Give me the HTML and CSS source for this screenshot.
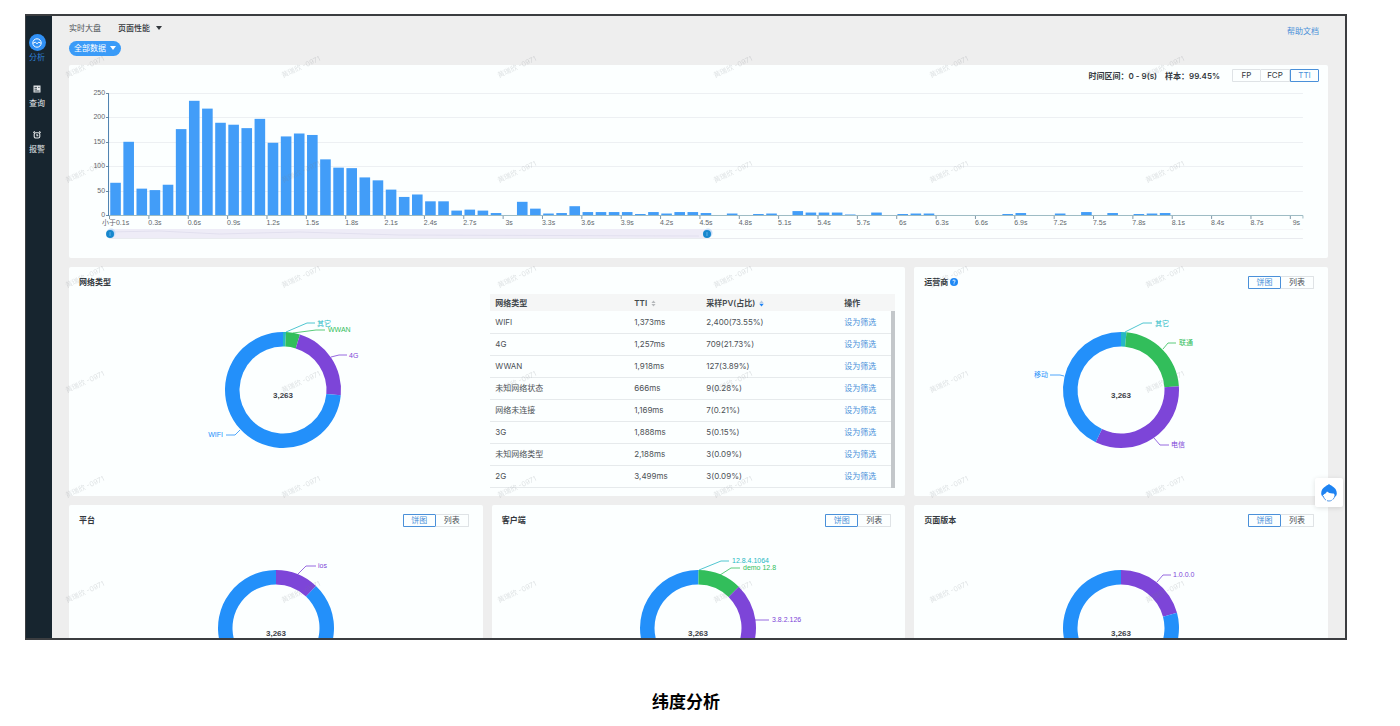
FILE: index.html
```
<!DOCTYPE html>
<html lang="zh-CN">
<head>
<meta charset="utf-8">
<title>纬度分析</title>
<link rel="stylesheet" href="styles.css">
</head>
<body>
<figure class="figure">
  <div class="screen">
    <nav class="sidebar">
      <a class="nav-item active" href="#">
        <span class="nav-badge"><svg width="10" height="10" viewBox="0 0 10 10" fill="none" stroke="currentColor"><circle cx="5" cy="5" r="4.2"/><path d="M1.2 5.2 3.3 4.2 5 5.7 6.8 4.2 8.8 5.2"/></svg></span>
        分析
      </a>
      <a class="nav-item" href="#">
        <span class="nav-badge"><svg width="8" height="8" viewBox="0 0 8 8"><path fill="currentColor" d="M.5.5h7v7h-7z"/><path stroke="#17252f" stroke-width=".8" d="M1.500 2.400h2.500M1.500 4.200h2.500M1.500 6h5M5.200 2.400h1.300"/></svg></span>
        查询
      </a>
      <a class="nav-item" href="#">
        <span class="nav-badge"><svg width="8" height="8" viewBox="0 0 8 8" fill="none" stroke="currentColor" stroke-width="1.100"><rect x="1.200" y="1.700" width="5.600" height="5.300" rx="1.600"/><path d="M.3 1.700 1.800.5M7.700 1.700 6.200.5M4 3v1.700h1.300"/></svg></span>
        报警
      </a>
    </nav>
    <main class="main">
      <header class="topbar">
        <div class="topbar-left">
          <div class="tabs">
            <a class="tab" href="#">实时大盘</a>
            <a class="tab current" href="#">页面性能 <span class="caret"></span></a>
          </div>
          <button class="pill" type="button">全部数据 <span class="caret"></span></button>
        </div>
        <a class="link help" href="#">帮助文档</a>
      </header>
      <div class="content">
        <section class="card wide">
          <div class="chart-head">
            <span>时间区间：0 - 9(s)</span>
            <span>样本：99.45%</span>
            <div class="toggle metric"><button type="button">FP</button><button type="button">FCP</button><button type="button" class="on">TTI</button></div>
          </div>
          <svg class="histogram" id="histogram" viewBox="0 0 1259 172"></svg>
        </section>

        <section class="card network">
          <div class="card-head"><h2>网络类型</h2></div>
          <div class="split">
            <svg class="donut" id="network" viewBox="0 0 300 180"></svg>
            <div class="table-box">
              <table>
                <thead>
                  <tr><th class="c-name">网络类型</th><th class="c-tti">TTI <svg class="sort" viewBox="0 0 6 8"><path fill="#b5b8bb" d="M3 .5 5.5 3.4h-5zM3 7.5.5 4.6h5z"/></svg></th><th class="c-pv">采样PV(占比) <svg class="sort" viewBox="0 0 6 8"><path fill="#b5c9e0" d="M3 .5 5.5 3.4h-5z"/><path fill="#1e83f5" d="M3 7.5.3 4.2h5.4z"/></svg></th><th>操作</th></tr>
                </thead>
                <tbody>
                  <tr><td>WIFI</td><td>1,373ms</td><td>2,400(73.55%)</td><td><a class="link" href="#">设为筛选</a></td></tr>
                  <tr><td>4G</td><td>1,257ms</td><td>709(21.73%)</td><td><a class="link" href="#">设为筛选</a></td></tr>
                  <tr><td>WWAN</td><td>1,918ms</td><td>127(3.89%)</td><td><a class="link" href="#">设为筛选</a></td></tr>
                  <tr><td>未知网络状态</td><td>666ms</td><td>9(0.28%)</td><td><a class="link" href="#">设为筛选</a></td></tr>
                  <tr><td>网络未连接</td><td>1,169ms</td><td>7(0.21%)</td><td><a class="link" href="#">设为筛选</a></td></tr>
                  <tr><td>3G</td><td>1,888ms</td><td>5(0.15%)</td><td><a class="link" href="#">设为筛选</a></td></tr>
                  <tr><td>未知网络类型</td><td>2,188ms</td><td>3(0.09%)</td><td><a class="link" href="#">设为筛选</a></td></tr>
                  <tr><td>2G</td><td>3,499ms</td><td>3(0.09%)</td><td><a class="link" href="#">设为筛选</a></td></tr>
                </tbody>
              </table>
              <span class="scrollbar"></span>
            </div>
          </div>
        </section>

        <section class="card">
          <div class="card-head"><h2>运营商 <svg class="hint" viewBox="0 0 8 8"><circle cx="4" cy="4" r="4" fill="#1e88f5"/><path d="M2.9 3.1a1.1 1.1 0 1 1 1.5 1c-.3.2-.4.3-.4.7M4 5.4v.9" fill="none" stroke="#fff" stroke-width=".9"/></svg></h2><div class="toggle"><button type="button" class="on">饼图</button><button type="button">列表</button></div></div>
          <svg class="donut" id="carrier" viewBox="0 0 300 180"></svg>
        </section>

        <section class="card">
          <div class="card-head"><h2>平台</h2><div class="toggle"><button type="button" class="on">饼图</button><button type="button">列表</button></div></div>
          <svg class="donut" id="platform" viewBox="0 0 300 180"></svg>
        </section>
        <section class="card">
          <div class="card-head"><h2>客户端</h2><div class="toggle"><button type="button" class="on">饼图</button><button type="button">列表</button></div></div>
          <svg class="donut" id="client" viewBox="0 0 300 180"></svg>
        </section>
        <section class="card">
          <div class="card-head"><h2>页面版本</h2><div class="toggle"><button type="button" class="on">饼图</button><button type="button">列表</button></div></div>
          <svg class="donut" id="version" viewBox="0 0 300 180"></svg>
        </section>
      </div>
      <svg class="watermark" aria-hidden="true">
        <defs><pattern id="wm" width="216" height="105" patternUnits="userSpaceOnUse"><text class="wm-text" transform="translate(15 23) rotate(-25)">黄瑞欣 -0971</text></pattern></defs>
        <rect width="100%" height="100%" fill="url(#wm)"/>
      </svg>
      <button class="assistant" type="button" aria-label="助手">
        <svg width="18" height="20" viewBox="0 0 18 20"><circle cx="9" cy="12.200" r="5.800" fill="#fff" stroke="#2b7fe0" stroke-width=".8" stroke-dasharray="5 1"/><path fill="#1e83f2" d="M9 .8c.6 1 1.600 1.300 3 2.200 3 1.600 4.800 4.300 4.800 7.200 0 1.500-.6 2.800-1.500 3.600-.1-1.600-.6-2.600-1.600-3.300-2.500.3-5.100-.3-6.700-1.900-.7 1.500-2 2.600-4 3.100-.2.700-.2 1.400-.2 2.100-1.100-.9-1.600-2.100-1.600-3.600 0-2.900 1.800-5.600 4.800-7.200C7.400 2.100 8.400 1.800 9 .8z"/></svg>
      </button>
    </main>
  </div>
  <figcaption>纬度分析</figcaption>
</figure>
<script src="charts.js"></script>
</body>
</html>
```
FILE: styles.css
```
* { box-sizing: border-box; }

body {
  margin: 0;
  background: #fff;
  color: #4c5156;
  font: 8px/12px Inter, "Noto Sans CJK SC", sans-serif;
}

a { color: inherit; text-decoration: none; }

button {
  font: inherit;
  color: inherit;
  cursor: pointer;
}

.figure {
  display: flex;
  flex-direction: column;
  height: 100vh;
  margin: 0;
  padding: 14px 53px 0 25px;
}

.screen {
  flex: 1;
  min-height: 0;
  display: flex;
  border: 2px solid #3b3d40;
  border-left-width: 1px;
  overflow: hidden;
}

figcaption {
  height: 86px;
  padding-top: 50px;
  text-align: center;
  color: #000;
  font-size: 17px;
  font-weight: 700;
  line-height: 25px;
}

/* Sidebar */
.sidebar {
  flex: 0 0 26px;
  display: flex;
  flex-direction: column;
  gap: 18px;
  padding: 18px 4px 0 0;
  background: #17252f;
  color: #e6e9eb;
}

.nav-item {
  display: flex;
  flex-direction: column;
  align-items: center;
  height: 28px;
}

.nav-badge {
  display: flex;
  align-items: center;
  justify-content: center;
  flex: 0 0 17px;
  width: 17px;
  border-radius: 50%;
}

.nav-item.active { color: #2f80d6; }
.nav-item.active .nav-badge { background: #3090f5; color: #fff; }

/* Main area */
.main {
  flex: 1;
  min-width: 0;
  position: relative;
  display: flex;
  flex-direction: column;
  background: #eee;
}

.topbar {
  flex: 0 0 49px;
  display: flex;
  justify-content: space-between;
  padding: 6px 26px 0 17px;
}

.topbar-left {
  display: flex;
  flex-direction: column;
  align-items: flex-start;
  gap: 7px;
}

.tabs { display: flex; gap: 17px; }
.tab.current { font-weight: 500; color: #33383d; }
.help { margin-top: 3px; }
.link { color: #4a90d9; }

.caret {
  display: inline-block;
  margin-left: 4px;
  border: 3px solid transparent;
  border-top: 4px solid currentColor;
  border-bottom: 0;
  vertical-align: 1px;
}

.pill {
  height: 15px;
  padding: 0 5px;
  border: 0;
  border-radius: 8px;
  background: #3a9bf8;
  color: #fff;
  line-height: 15px;
}

.pill .caret { margin-left: 2px; }

.content {
  flex: 1;
  min-height: 0;
  display: grid;
  grid-template-columns: repeat(3, minmax(0, 1fr));
  grid-auto-rows: max-content;
  gap: 9px;
  padding: 0 17px;
  overflow: hidden;
}

.card {
  min-width: 0;
  min-height: 229px;
  padding: 8px 10px 6px;
  border-radius: 2px;
  background: #fcffff;
}

.card.wide {
  grid-column: 1 / -1;
  min-height: 193px;
  padding: 4px 0 0;
}

.card.network { grid-column: span 2; }

.chart-head {
  display: flex;
  align-items: center;
  justify-content: flex-end;
  gap: 8px;
  padding-right: 9px;
  color: #33383d;
  font-weight: 600;
}

.card-head {
  display: flex;
  justify-content: space-between;
  align-items: center;
  height: 14px;
  padding-right: 4px;
}

h2 {
  margin: 0;
  color: #33383d;
  font-size: 8px;
  font-weight: 700;
}

.hint { width: 8px; height: 8px; vertical-align: -1px; }

.toggle { display: flex; font-weight: 400; }

.toggle button {
  width: 33px;
  height: 13px;
  padding: 0;
  border: 1px solid #dfe3e6;
  border-radius: 0 1px 1px 0;
  background: transparent;
  line-height: 11px;
}

.toggle button + button { border-left: 0; }
.toggle button.on { border: 1px solid #4a90d9; color: #4a90d9; }
.toggle.metric { margin-left: 4px; }
.toggle.metric button { width: 29px; }

/* Charts */
.histogram, .donut {
  display: block;
  font-family: "Liberation Sans", "Noto Sans CJK SC", sans-serif;
}

.histogram { width: 100%; }
.donut { width: 300px; max-width: 100%; margin: 11px auto 0; }
.chart-label { font-size: 7px; }
.axis-label { font-size: 7px; fill: #62676c; }
.total { font-size: 8px; font-weight: 700; fill: #3d4247; }

.split { display: flex; align-items: flex-start; gap: 4px; }
.split .donut { flex: 0 0 auto; }

.table-box {
  position: relative;
  flex: 0 0 405px;
  margin-top: 5px;
}

table {
  width: 100%;
  table-layout: fixed;
  border-collapse: collapse;
}

th, td {
  height: 22px;
  padding: 0 5px;
  border-bottom: 1px solid #e6eaec;
  text-align: left;
}

th {
  height: 17px;
  border: 0;
  background: #f5f6f6;
  color: #43484d;
  font-weight: 600;
}

.c-name { width: 139px; }
.c-tti { width: 72px; }
.c-pv { width: 138px; }
.sort { width: 5px; height: 7px; margin-left: 2px; vertical-align: -1px; }

.scrollbar {
  position: absolute;
  top: 17px;
  right: 0;
  bottom: 0;
  width: 4px;
  background: #c3c7ca;
}

/* Overlays */
.watermark {
  position: absolute;
  top: 39px;
  left: 0;
  width: 100%;
  height: calc(100% - 39px);
  pointer-events: none;
}

.wm-text { font-size: 7px; fill: #707880; fill-opacity: .22; }

.assistant {
  position: absolute;
  right: 2px;
  bottom: 131px;
  display: flex;
  align-items: center;
  justify-content: center;
  width: 28px;
  height: 29px;
  padding: 0;
  border: 0;
  border-radius: 2px;
  background: #fff;
  box-shadow: 0 1px 5px rgba(0, 0, 0, .12);
}
```
FILE: charts.js
```
const BLUE = '#2390fa', PURPLE = '#7d45d8', GREEN = '#32be5b', CYAN = '#25b8c4';

function drawHistogram() {
  const values = [66,150,54,51,62,176,234,218,189,185,178,197,148,161,167,164,114,97,96,77,71,52,37,42,28,28,9,11,9,4,0,27,13,3,4,18,6,6,6,6,2,6,3,6,6,4,0,3,0,2,3,0,8,5,5,5,1,0,5,0,2,3,3,0,0,0,0,0,2,4,0,0,3,0,6,0,4,0,2,3,4,0,0,0,0,0,0,0,0,0,0];
  const x0 = 40, x1 = 1234, base = 134, scale = 0.488;
  const step = (x1 - x0) / values.length;
  let out = '';
  for (let v = 0; v <= 250; v += 50) {
    const y = Math.round(base - v * scale) - .5;
    if (v) out += `<path d="M${x0} ${y}H${x1}" stroke="#edf0f3"/>`;
    out += `<path d="M${x0 - 3} ${y}h3" stroke="#6b88a0"/>`;
    out += `<text class="axis-label" x="${x0 - 4}" y="${y + 2}" text-anchor="end">${v}</text>`;
  }
  values.forEach((v, i) => {
    const h = v * scale + 1;
    if (v) out += `<rect x="${x0 + i * step + 1.2}" y="${base - h}" width="10.6" height="${h}" fill="#429df8"/>`;
    if (i % 3 === 0) {
      const label = i === 0 ? '小于0.1s' : (i / 10) + 's';
      out += `<path d="M${x0 + i * step + .5} ${base}v3" stroke="#7f98a8"/>`;
      out += `<text class="axis-label" x="${x0 + (i + .5) * step}" y="143" text-anchor="middle">${label}</text>`;
    }
  });
  out += `<path d="M${x0 - .5} 12V${base}" stroke="#4a7fb0"/><path d="M${x0} ${base - .5}H${x1}v3" fill="none" stroke="#9dbcc4"/>`;
  out += `<rect x="40" y="147" width="598" height="9" fill="#eeecf7"/><path d="M40 150l50-1 60 3 80-2 100 3 300 1" fill="none" stroke="#e2e0ef"/>`;
  out += `<path d="M40 156.500H${x1}" stroke="#e9ebef"/><path d="M638 147.500H${x1}" stroke="#f5f6f8"/>`;
  for (const x of [41, 638]) out += `<circle cx="${x + 1}" cy="151" r="4.500" fill="#c6dcf8"/><circle cx="${x}" cy="152" r="4" fill="#1787cd"/><path d="M${x} 150v4" stroke="#5fb0e6"/>`;
  document.getElementById('histogram').innerHTML = out;
}

function drawDonut(id, slices, labels) {
  let out = '', start = 0;
  const point = (share, r) => {
    const a = share * Math.PI * 2;
    return `${(Math.sin(a) * r).toFixed(2)} ${(-Math.cos(a) * r).toFixed(2)}`;
  };
  for (const [color, share] of slices) {
    const end = start + share, big = share > .5 ? 1 : 0;
    out += `<path fill="${color}" d="M${point(start, 58)}A58 58 0 ${big} 1 ${point(end, 58)}L${point(end, 43.5)}A43.500 43.500 0 ${big} 0 ${point(start, 43.5)}Z"/>`;
    start = end;
  }
  for (const [color, text, line, tx, ty, anchor] of labels) {
    out += `<polyline points="${line}" fill="none" stroke="${color}" stroke-width=".8"/>`;
    out += `<text class="chart-label" x="${tx}" y="${ty}" fill="${color}" text-anchor="${anchor || 'start'}">${text}</text>`;
  }
  out += '<text class="total" y="8" text-anchor="middle">3,263</text>';
  document.getElementById(id).innerHTML = `<g transform="translate(150 90)">${out}</g>`;
}

drawHistogram();
drawDonut('network', [[CYAN, .0083], [GREEN, .0389], [PURPLE, .2173], [BLUE, .7355]], [
  [CYAN, '其它', '3,-58 24,-67 32,-67', 34, -64],
  [GREEN, 'WWAN', '10,-57 33,-60 42,-60', 45, -58],
  [PURPLE, '4G', '48,-33 56,-35 64,-35', 66, -32],
  [BLUE, 'WIFI', '-43,40 -48,45 -57,45', -60, 47, 'end']
]);
drawDonut('carrier', [[CYAN, .015], [GREEN, .225], [PURPLE, .332], [BLUE, .428]], [
  [CYAN, '其它', '4,-58 22,-67 31,-67', 34, -64],
  [GREEN, '联通', '42,-41 47,-47 55,-47', 58, -45],
  [BLUE, '移动', '-57,-14 -61,-15 -71,-15', -73, -13, 'end'],
  [PURPLE, '电信', '33,48 39,55 48,55', 50, 57]
]);
drawDonut('platform', [[PURPLE, .121], [BLUE, .879]], [
  [PURPLE, 'ios', '22,-54 30,-62 40,-62', 42, -60]
]);
drawDonut('client', [[CYAN, .002], [GREEN, .122], [PURPLE, .21], [BLUE, .666]], [
  [CYAN, '12.8.4.1064', '1,-58 23,-67 31,-67', 34, -65],
  [GREEN, 'demo 12.8', '22,-53 33,-60 42,-60', 45, -58],
  [PURPLE, '3.8.2.126', '57,-8 71,-8', 74, -6]
]);
drawDonut('version', [[PURPLE, .208], [BLUE, .792]], [
  [PURPLE, '1.0.0.0', '36,-46 42,-53 50,-53', 52, -51]
]);
```
